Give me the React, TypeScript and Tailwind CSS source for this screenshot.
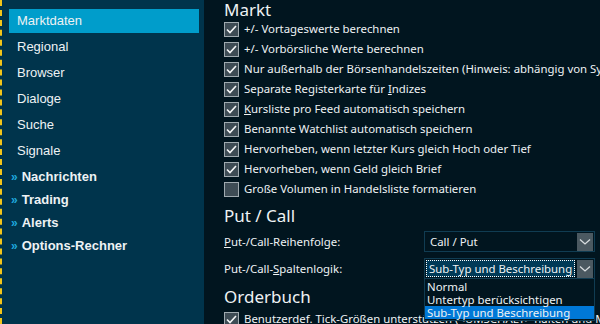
import React from "react";

const sub = ["Marktdaten", "Regional", "Browser", "Dialoge", "Suche", "Signale"];
const groups = ["Nachrichten", "Trading", "Alerts", "Options-Rechner"];

function Check({ on }: { on: boolean }) {
  return (
    <span className="w-[15px] h-[15px] shrink-0 border border-[#a0aab0] bg-[#3e4c55] flex items-center justify-center">
      {on && (
        <svg width="11" height="11" viewBox="0 0 11 11">
          <polyline points="1,5.5 4,8.5 10,2" fill="none" stroke="#f2f4f5" strokeWidth="1.6" />
        </svg>
      )}
    </span>
  );
}

function Row({ on, children }: { on: boolean; children: React.ReactNode }) {
  return (
    <div className="h-[20px] flex items-center gap-[5px] whitespace-nowrap">
      <Check on={on} />
      <span>{children}</span>
    </div>
  );
}

function Chevron() {
  return (
    <svg width="12" height="8" viewBox="0 0 12 8">
      <polyline points="1,1.5 6,6 11,1.5" fill="none" stroke="#d8dde0" strokeWidth="1.3" />
    </svg>
  );
}

export default function App() {
  return (
    <div className="w-[600px] h-[324px] overflow-hidden flex bg-[#01151f] text-[#eef2f4]">
      {/* Sidebar */}
      <div className="w-[204px] shrink-0 border-l-2 border-dashed border-[#f2c519] bg-[#00344c] pt-[9px] pl-[7px] pr-[5px] font-['Liberation_Sans',Arial,sans-serif] text-[13px]">
        <div className="flex flex-col gap-[2px]">
          {sub.map((s, i) => (
            <div
              key={s}
              className={
                "h-[24px] flex items-center pl-[8px] " + (i === 0 ? "bg-[#009dcb]" : "")
              }
            >
              {s}
            </div>
          ))}
        </div>
        <div className="flex flex-col mt-[2px]">
          {groups.map((g) => (
            <div key={g} className="h-[23px] flex items-center gap-[4px] pl-[2px] font-bold">
              <span className="text-[#1ea7dc] text-[12px] font-bold">»</span>
              {g}
            </div>
          ))}
        </div>
      </div>

      {/* Content */}
      <div className="flex-1 min-w-0 pl-[20px] font-['Noto_Sans',sans-serif] text-[11.4px] leading-none overflow-hidden">
        <div className="text-[17px] h-[19px] leading-[19px]">Markt</div>
        <div className="flex flex-col">
          <Row on>+/- Vortageswerte berechnen</Row>
          <Row on>+/- Vorbörsliche Werte berechnen</Row>
          <Row on>Nur außerhalb der Börsenhandelszeiten (Hinweis: abhängig von System-Einstellungen)</Row>
          <Row on>
            Separate Registerkarte für <span className="underline">I</span>ndizes
          </Row>
          <Row on>
            <span className="underline">K</span>ursliste pro Feed automatisch speichern
          </Row>
          <Row on>Benannte Watchlist automatisch speichern</Row>
          <Row on>Hervorheben, wenn letzter Kurs gleich Hoch oder Tief</Row>
          <Row on>Hervorheben, wenn Geld gleich Brief</Row>
          <Row on={false}>Große Volumen in Handelsliste formatieren</Row>
        </div>

        <div className="text-[17px] h-[24px] leading-[24px] mt-[5px]">Put / Call</div>
        <div className="relative">
          <div className="h-[27px] flex items-center">
            <span className="w-[200px]">
              <span className="underline">P</span>ut-/Call-Reihenfolge:
            </span>
            <div className="w-[171px] h-[21px] border border-[#103c52] flex items-center justify-between pl-[5px] pr-[1px]">
              <span>Call / Put</span>
              <span className="w-[16px] h-[18px] bg-[#4b5961] flex items-center justify-center">
                <Chevron />
              </span>
            </div>
          </div>
          <div className="h-[27px] flex items-center">
            <span className="w-[200px]">
              Put-/Call-<span className="underline">S</span>paltenlogik:
            </span>
            <div className="w-[171px] h-[21px] border border-[#103c52] flex items-center justify-between pl-[1px] pr-[1px]">
              <span className="h-[17px] w-[149px] border border-dotted border-white bg-[#003a57] flex items-center pl-[2px] whitespace-nowrap">
                Sub-Typ und Beschreibung
              </span>
              <span className="w-[16px] h-[18px] bg-[#4b5961] flex items-center justify-center">
                <Chevron />
              </span>
            </div>
          </div>

          {/* Open dropdown list */}
          <div className="absolute left-[200px] top-[50px] w-[171px] border border-[#103c52] bg-[#01151f] z-10 pt-[1px] pb-[1px]">
            <div className="h-[13px] flex items-center pl-[2px]">Normal</div>
            <div className="h-[13px] flex items-center pl-[2px]">Untertyp berücksichtigen</div>
            <div className="h-[13px] flex items-center pl-[2px] bg-[#0078d7]">Sub-Typ und Beschreibung</div>
          </div>
        </div>

        <div className="text-[17px] h-[24px] leading-[24px] mt-[3px]">Orderbuch</div>
        <Row on>Benutzerdef. Tick-Größen unterstützen (&lt;UMSCHALT&gt; halten und Mausrad drehen)</Row>
      </div>
    </div>
  );
}
